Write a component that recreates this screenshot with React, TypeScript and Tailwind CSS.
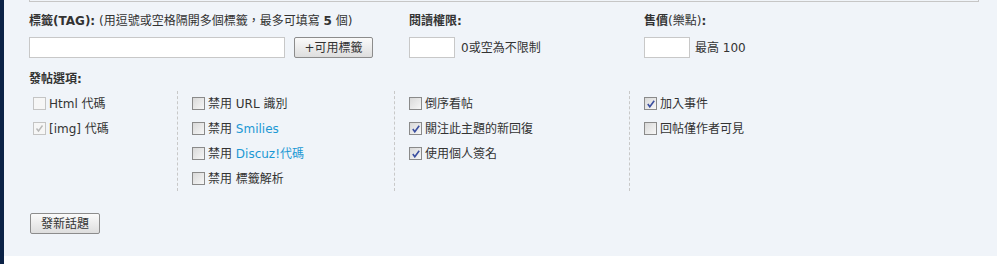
import React from "react";

type CB = { state: "off" | "on" | "disabledOff" | "disabledOn" };

function Box({ state }: CB) {
  if (state === "disabledOff" || state === "disabledOn") {
    return (
      <span className="relative inline-block w-[13px] h-[13px] border border-[#c4c4c4] bg-[#f6f6f6] shrink-0">
        {state === "disabledOn" && (
          <svg className="absolute left-[1px] top-[1px]" width="9" height="9" viewBox="0 0 9 9">
            <path d="M1.5 4.5 L3.5 7 L7.5 1.5" fill="none" stroke="#b8b8b8" strokeWidth="1.4" />
          </svg>
        )}
      </span>
    );
  }
  return (
    <span className="relative inline-block w-[13px] h-[13px] border border-[#8a8a8a] bg-gradient-to-br from-[#d8d8d8] to-[#f8f8f8] shrink-0 p-[1px]">
      <span className="block w-full h-full bg-gradient-to-br from-[#dcdcdc] to-[#f4f4f4]" />
      {state === "on" && (
        <svg className="absolute left-[2px] top-[2px]" width="8" height="8" viewBox="0 0 8 8">
          <path d="M0.8 4 L2.8 6.8 L7.2 0.8" fill="none" stroke="#3b4fa0" strokeWidth="1.6" />
        </svg>
      )}
    </span>
  );
}

function Item({ state, children }: { state: CB["state"]; children: React.ReactNode }) {
  return (
    <div className="h-[25px] flex items-center gap-[3px]">
      <Box state={state} />
      <span className="whitespace-nowrap">{children}</span>
    </div>
  );
}

const link = "text-[#1c98d4]";

export default function App() {
  return (
    <div
      className="w-[997px] h-[264px] flex bg-white text-[12px] text-[#333]"
      style={{ fontFamily: '"DejaVu Sans", "Noto Sans CJK TC", sans-serif' }}
    >
      <div className="w-[4px] h-full bg-[#0b2246] shrink-0" />
      <div className="flex-1 flex flex-col">
        <div className="h-[256px] bg-[#f0f4f9] pl-[25px] flex flex-col">
          <div className="w-[950px] h-[2px] border-x border-b border-[#c6c6c6]" />
          <div className="flex mt-[11px]">
            <div className="w-[380px]">
              <div className="h-[16px] leading-[16px] whitespace-nowrap">
                <b>標籤(TAG):</b> (用逗號或空格隔開多個標籤，最多可填寫 <b>5</b> 個)
              </div>
              <div className="flex items-center mt-[8px] gap-[9px]">
                <div className="w-[256px] h-[21px] border border-[#c8c8c8] bg-white" />
                <button className="w-[79px] h-[21px] border border-[#8c8c8c] rounded-[2px] bg-gradient-to-b from-[#fafafa] to-[#dedede] text-[12px] text-[#333] leading-none">
                  +可用標籤
                </button>
              </div>
            </div>
            <div className="w-[235px]">
              <div className="h-[16px] leading-[16px] font-bold">閱讀權限:</div>
              <div className="flex items-center mt-[8px] gap-[6px]">
                <div className="w-[46px] h-[21px] border border-[#c8c8c8] bg-white" />
                <span>0或空為不限制</span>
              </div>
            </div>
            <div>
              <div className="h-[16px] leading-[16px]">
                <b>售價</b>(樂點)<b>:</b>
              </div>
              <div className="flex items-center mt-[8px] gap-[5px]">
                <div className="w-[46px] h-[21px] border border-[#c8c8c8] bg-white" />
                <span>最高 100</span>
              </div>
            </div>
          </div>
          <div className="mt-[13px] h-[16px] leading-[16px] font-bold">發帖選項:</div>
          <div className="flex mt-[4px]">
            <div className="w-[148px] pl-[4px]">
              <Item state="disabledOff">Html 代碼</Item>
              <Item state="disabledOn">[img] 代碼</Item>
            </div>
            <div className="w-[217px] border-l border-dashed border-[#c8c8c8] pl-[14px]">
              <Item state="off">禁用 URL 識別</Item>
              <Item state="off">
                禁用 <span className={link}>Smilies</span>
              </Item>
              <Item state="off">
                禁用 <span className={link}>Discuz!代碼</span>
              </Item>
              <Item state="off">禁用 標籤解析</Item>
            </div>
            <div className="w-[235px] border-l border-dashed border-[#c8c8c8] pl-[14px]">
              <Item state="off">倒序看帖</Item>
              <Item state="on">關注此主題的新回復</Item>
              <Item state="on">使用個人簽名</Item>
            </div>
            <div className="border-l border-dashed border-[#c8c8c8] pl-[14px]">
              <Item state="on">加入事件</Item>
              <Item state="off">回帖僅作者可見</Item>
            </div>
          </div>
          <div className="mt-[22px]">
            <button className="ml-[1px] w-[70px] h-[21px] border border-[#8c8c8c] rounded-[2px] bg-gradient-to-b from-[#fafafa] to-[#dedede] text-[12px] text-[#333] leading-none">
              發新話題
            </button>
          </div>
        </div>
      </div>
    </div>
  );
}
